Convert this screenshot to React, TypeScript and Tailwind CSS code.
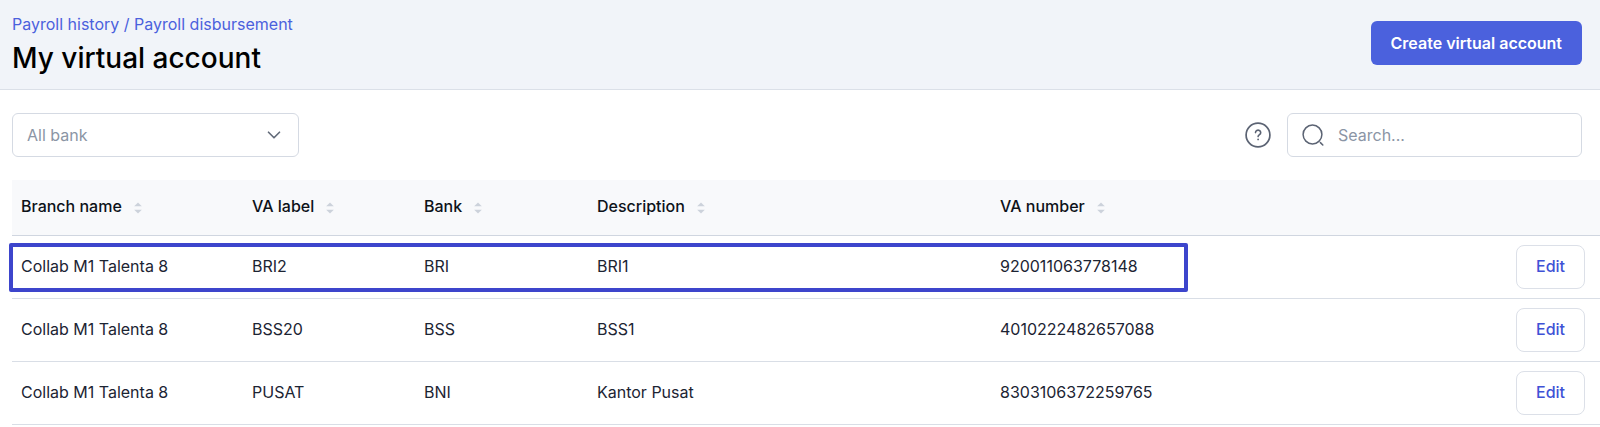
import { ChevronDown } from "lucide-react";

const columns = [
  { label: "Branch name", width: "w-[231px]" },
  { label: "VA label", width: "w-[172px]" },
  { label: "Bank", width: "w-[173px]" },
  { label: "Description", width: "w-[403px]" },
  { label: "VA number", width: "w-auto" },
];

const accounts = [
  { branch: "Collab M1 Talenta 8", label: "BRI2", bank: "BRI", desc: "BRI1", number: "920011063778148", highlighted: true },
  { branch: "Collab M1 Talenta 8", label: "BSS20", bank: "BSS", desc: "BSS1", number: "4010222482657088", highlighted: false },
  { branch: "Collab M1 Talenta 8", label: "PUSAT", bank: "BNI", desc: "Kantor Pusat", number: "8303106372259765", highlighted: false },
];

function SortIcon() {
  return (
    <svg viewBox="0 0 8 12" className="w-2 h-3 mt-1 fill-[#ccd2db]" aria-hidden="true">
      <path d="M4 0.5 L7.8 4.2 H0.2 Z" />
      <path d="M4 11.5 L7.8 7.8 H0.2 Z" />
    </svg>
  );
}

function HelpIcon() {
  return (
    <svg viewBox="0 0 26 26" className="w-[26px] h-[26px]" fill="none" stroke="#5b6373" aria-hidden="true">
      <circle cx="13" cy="13" r="11.9" strokeWidth="1.7" />
      <path d="M10.5 10.6a2.6 2.4 0 1 1 4 2c-.9.6-1.4 1-1.4 2" strokeWidth="1.6" strokeLinecap="round" />
      <circle cx="13.1" cy="17.4" r="0.9" fill="#5b6373" stroke="none" />
    </svg>
  );
}

function SearchIcon() {
  return (
    <svg viewBox="0 0 22 22" className="w-[22px] h-[22px] shrink-0" fill="none" stroke="#5b6373" strokeWidth="1.5" aria-hidden="true">
      <circle cx="10.5" cy="10.5" r="9.4" />
      <path d="M18.4 18.6l2.4 2.4" strokeLinecap="round" />
    </svg>
  );
}

export default function App() {
  return (
    <div className="min-h-screen bg-white font-['Inter',sans-serif] text-base text-[#1c2433]">
      {/* Page header */}
      <header className="flex items-start justify-between bg-[#f1f4f9] border-b border-[#dbe0e8] pl-3 pr-[18px] pt-3 pb-[13px]">
        <div>
          <nav aria-label="Breadcrumb" className="leading-6 text-[#4b61dd]">
            <a href="#history">Payroll history</a> / <a href="#disbursement">Payroll disbursement</a>
          </nav>
          <h1 className="mt-1 text-[28px] leading-9 font-medium text-black">My virtual account</h1>
        </div>
        <button className="mt-[9px] h-11 px-5 rounded-md bg-[#4b61dd] text-white font-semibold">
          Create virtual account
        </button>
      </header>

      {/* Filters */}
      <div className="flex items-center justify-between pl-3 pr-[18px] py-[23px]">
        <div className="relative w-[287px]">
          <select
            aria-label="Bank"
            className="w-full h-11 appearance-none rounded-md border border-[#d5dae3] bg-white px-[14px] text-[#8b95a5]"
          >
            <option>All bank</option>
          </select>
          <ChevronDown className="absolute right-[14px] top-[11px] w-[22px] h-[22px] text-[#626b79] pointer-events-none" strokeWidth={1.8} />
        </div>
        <div className="flex items-center gap-4">
          <button aria-label="Help">
            <HelpIcon />
          </button>
          <label className="flex items-center gap-[14px] w-[295px] h-11 rounded-md border border-[#d5dae3] px-[14px]">
            <SearchIcon />
            <input
              type="search"
              aria-label="Search"
              placeholder="Search..."
              className="min-w-0 flex-1 outline-none placeholder:text-[#8b95a5]"
            />
          </label>
        </div>
      </div>

      {/* Virtual accounts */}
      <div className="pl-3">
        <table className="w-full table-fixed border-collapse text-left">
          <thead>
            <tr className="h-[55px] bg-[#f8f9fb] border-b border-[#d0d6e0] text-[#0d1219]">
              {columns.map((col) => (
                <th key={col.label} className={`${col.width} pl-[9px] pb-0.5 font-medium`}>
                  <span className="flex items-center gap-3">
                    {col.label}
                    <SortIcon />
                  </span>
                </th>
              ))}
              <th className="w-[120px]" aria-label="Actions" />
            </tr>
          </thead>
          <tbody>
            {accounts.map((account) => (
              <tr key={account.number} className="relative h-[63px] border-b border-[#d9dee6]">
                <td className="pl-[9px] pb-0.5">
                  {account.branch}
                  {account.highlighted && (
                    <span className="absolute -left-[3px] right-[412px] top-2 h-[49px] rounded-xs border-4 border-[#3d45cc] pointer-events-none" />
                  )}
                </td>
                <td className="pl-[9px] pb-0.5">{account.label}</td>
                <td className="pl-[9px] pb-0.5">{account.bank}</td>
                <td className="pl-[9px] pb-0.5">{account.desc}</td>
                <td className="pl-[9px] pb-0.5">{account.number}</td>
                <td className="pr-[15px] text-right">
                  <button className="h-11 w-[69px] rounded-lg border border-[#dce0e8] bg-white pb-0.5 font-medium text-[#3f52d6]">
                    Edit
                  </button>
                </td>
              </tr>
            ))}
          </tbody>
        </table>
      </div>
    </div>
  );
}
